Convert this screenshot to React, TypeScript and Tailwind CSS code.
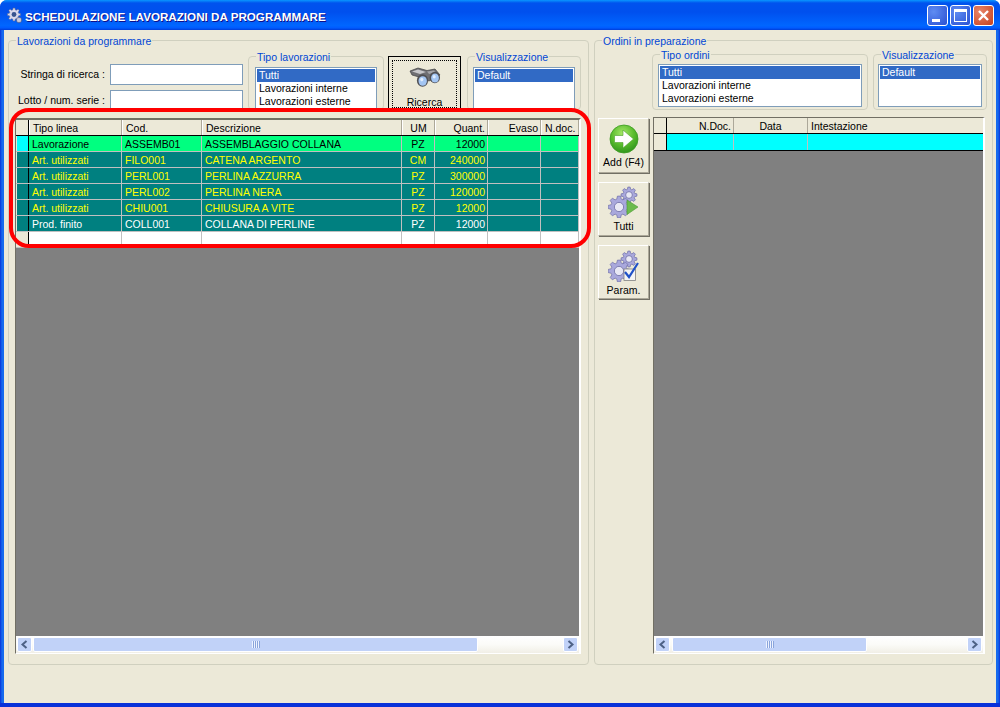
import React from 'react';

const gearPath = (cx: number, cy: number, r: number, teeth = 8) => {
  const pts: string[] = [];
  const step = (Math.PI * 2) / teeth;
  for (let i = 0; i < teeth; i++) {
    const a = i * step;
    const at = (rad: number, off: number) =>
      `${(cx + rad * Math.cos(a + off)).toFixed(2)},${(cy + rad * Math.sin(a + off)).toFixed(2)}`;
    pts.push(at(r * 0.74, -step * 0.36), at(r, -step * 0.18), at(r, step * 0.18), at(r * 0.74, step * 0.36));
  }
  return `M${pts.join('L')}Z`;
};

const Gear = ({ cx, cy, r }: { cx: number; cy: number; r: number }) => (
  <g>
    <path d={gearPath(cx, cy, r)} fill="#a9a8dc" stroke="#6e6ea6" strokeWidth="0.7" />
    <circle cx={cx} cy={cy} r={r * 0.42} fill="#e8e8f4" stroke="#6e6ea6" strokeWidth="0.8" />
  </g>
);

const Binoculars = () => (
  <svg className="shrink-0" width="36" height="24" viewBox="0 0 36 24">
    <path d="M3 5 L11 2 L20 4.5 L28 3 L33 9 L22 15 L12 11 L5 9 Z" fill="#6f6f73" stroke="#3f3f42" strokeWidth="0.7" />
    <path d="M5 5.5 L11 3.5 L19 6 L13 8 Z" fill="#c8c8cb" />
    <path d="M20 5.5 L27 4.5 L29 6.5 L22 8 Z" fill="#a4a4a8" />
    <ellipse cx="15.5" cy="14.5" rx="5.6" ry="6.2" fill="#4f4f53" />
    <ellipse cx="15.7" cy="15" rx="4.2" ry="4.8" fill="#a3c5f2" />
    <ellipse cx="14.8" cy="13.6" rx="1.6" ry="1.8" fill="#dfecfd" />
    <ellipse cx="27.8" cy="11.5" rx="5.2" ry="5.8" fill="#4f4f53" />
    <ellipse cx="28" cy="12" rx="3.9" ry="4.5" fill="#a3c5f2" />
    <ellipse cx="27.2" cy="10.8" rx="1.5" ry="1.7" fill="#dfecfd" />
  </svg>
);

const AddIcon = () => (
  <svg width="30" height="30" viewBox="0 0 30 30">
    <defs>
      <radialGradient id="addGreen" cx="45%" cy="30%" r="75%">
        <stop offset="0%" stopColor="#a6e868" />
        <stop offset="55%" stopColor="#58bb2c" />
        <stop offset="100%" stopColor="#2b8f1a" />
      </radialGradient>
    </defs>
    <circle cx="15" cy="15" r="14" fill="url(#addGreen)" stroke="#3c9a22" strokeWidth="0.8" />
    <path d="M5.5 11.5 H14 V6 L24.5 15 L14 24 V18.5 H5.5 Z" fill="#fff" stroke="#4b9f2c" strokeWidth="0.6" />
  </svg>
);

const TuttiIcon = () => (
  <svg width="32" height="32" viewBox="0 0 32 32">
    <Gear cx={21} cy={9} r={8} />
    <Gear cx={11} cy={21} r={11} />
    <path d="M19 14 L30 21 L19 28.5 Z" fill="#6cbb4c" stroke="#4a9a34" strokeWidth="0.6" />
  </svg>
);

const ParamIcon = () => (
  <svg width="32" height="32" viewBox="0 0 32 32">
    <Gear cx={21} cy={9} r={8} />
    <Gear cx={11} cy={21} r={11} />
    <rect x="16" y="19" width="11.5" height="11.5" fill="#f4f4f4" stroke="#808080" strokeWidth="0.8" />
    <path d="M17 22 L21 27 L30 13" fill="none" stroke="#1f51c8" strokeWidth="2.2" />
  </svg>
);

const TitleIcon = () => (
  <svg width="17" height="17" viewBox="0 0 17 17">
    <path d={gearPath(8, 7.5, 6.5)} fill="#d9d9ec" stroke="#5c6a96" strokeWidth="0.6" />
    <circle cx="8" cy="7.5" r="2.4" fill="#37548f" />
    <path d={gearPath(13, 13, 3)} fill="#c8cbe0" stroke="#3c4a76" strokeWidth="0.5" />
  </svg>
);

const Group = ({ title, className, children }: { title: string; className: string; children?: React.ReactNode }) => (
  <fieldset className={`box-border border border-[#d0d0bf] rounded-[4px] min-w-0 ${className}`}>
    <legend className="ml-[7px] px-[1px] text-[#0046d5] leading-[14px] h-[13px]">{title}</legend>
    {children}
  </fieldset>
);

const ListBox = ({ items, className }: { items: string[]; className: string }) => (
  <div className={`box-border border border-[#7f9db9] bg-white p-px overflow-hidden ${className}`}>
    {items.map((it, i) => (
      <div key={it} className={`h-[13px] leading-[13px] pl-[2px] whitespace-nowrap ${i === 0 ? 'bg-[#316ac5] text-white' : 'text-black'}`}>
        {it}
      </div>
    ))}
  </div>
);

const SideButton = ({ label, icon, className }: { label: string; icon: React.ReactNode; className: string }) => (
  <button className={`box-border w-[51px] flex flex-col items-center bg-[#ece9d8] border border-t-white border-l-white border-r-[#aca899] border-b-[#aca899] shadow-[1px_1px_0_#716f64] text-black ${className}`}>
    {icon}
    <span className="leading-[13px] mt-[2px] whitespace-nowrap">{label}</span>
  </button>
);

type Col = { label: string; w: string; align?: string };

const Cell = ({ w, align, className, children }: { w: string; align?: string; className?: string; children?: React.ReactNode }) => (
  <div className={`box-border h-full shrink-0 px-[3px] whitespace-nowrap overflow-hidden ${w} ${align ?? ''} ${className ?? ''}`}>{children}</div>
);

const HeaderRow = ({ cols, ind }: { cols: Col[]; ind: string }) => (
  <div className="flex h-[16px] shrink-0 leading-[16px] bg-[#ece9d8] border-b border-black text-black">
    <div className={`box-border h-full shrink-0 border-r border-black ${ind}`} />
    {cols.map((c) => (
      <Cell key={c.label} w={c.w} align={c.align} className="border-r border-[#aca899] border-l border-l-white">
        {c.label}
      </Cell>
    ))}
  </div>
);

const leftCols: Col[] = [
  { label: 'Tipo linea', w: 'w-[93px]' },
  { label: 'Cod.', w: 'w-[80px]' },
  { label: 'Descrizione', w: 'w-[200px]' },
  { label: 'UM', w: 'w-[33px]', align: 'text-center' },
  { label: 'Quant.', w: 'w-[53px]', align: 'text-right pr-[2px]' },
  { label: 'Evaso', w: 'w-[53px]', align: 'text-right pr-[2px]' },
  { label: 'N.doc.', w: 'w-[38px]', align: 'text-right' },
];

const rows = [
  { tipo: 'Lavorazione', cod: 'ASSEMB01', des: 'ASSEMBLAGGIO COLLANA', um: 'PZ', q: '12000', bg: 'bg-[#00ff80]', fg: 'text-black', ind: 'bg-[#00ffff]' },
  { tipo: 'Art. utilizzati', cod: 'FILO001', des: 'CATENA ARGENTO', um: 'CM', q: '240000', bg: 'bg-[#008080]', fg: 'text-[#ffff00]', ind: 'bg-[#008080]' },
  { tipo: 'Art. utilizzati', cod: 'PERL001', des: 'PERLINA AZZURRA', um: 'PZ', q: '300000', bg: 'bg-[#008080]', fg: 'text-[#ffff00]', ind: 'bg-[#008080]' },
  { tipo: 'Art. utilizzati', cod: 'PERL002', des: 'PERLINA NERA', um: 'PZ', q: '120000', bg: 'bg-[#008080]', fg: 'text-[#ffff00]', ind: 'bg-[#008080]' },
  { tipo: 'Art. utilizzati', cod: 'CHIU001', des: 'CHIUSURA A VITE', um: 'PZ', q: '12000', bg: 'bg-[#008080]', fg: 'text-[#ffff00]', ind: 'bg-[#008080]' },
  { tipo: 'Prod. finito', cod: 'COLL001', des: 'COLLANA DI PERLINE', um: 'PZ', q: '12000', bg: 'bg-[#008080]', fg: 'text-white', ind: 'bg-[#008080]' },
];

const DataRow = ({ vals, bg, fg, ind }: { vals: string[]; bg: string; fg: string; ind: string }) => (
  <div className={`flex h-[16px] shrink-0 leading-[16px] border-b border-[#c0c0c0] ${bg} ${fg}`}>
    <div className="box-border h-full w-[13px] shrink-0 bg-[#ece9d8] border-r border-black pl-[1px]">
      <div className={`h-full ${ind}`} />
    </div>
    {leftCols.map((c, i) => (
      <Cell key={c.label} w={c.w} align={c.align} className="border-r border-[#c0c0c0]">
        {vals[i]}
      </Cell>
    ))}
  </div>
);

const Chevron = ({ dir }: { dir: 'left' | 'right' }) => (
  <svg width="9" height="9" viewBox="0 0 9 9">
    <path d={dir === 'left' ? 'M6.5 1 L2.5 4.5 L6.5 8' : 'M2.5 1 L6.5 4.5 L2.5 8'} fill="none" stroke="#4d6185" strokeWidth="2" />
  </svg>
);

const ScrollButton = ({ dir }: { dir: 'left' | 'right' }) => (
  <div className="box-border w-[15px] h-[15px] shrink-0 flex items-center justify-center rounded-[2px] border border-white bg-[#c1d2f8]">
    <Chevron dir={dir} />
  </div>
);

const Scrollbar = ({ thumb }: { thumb: string }) => (
  <div className="flex items-center h-[17px] shrink-0 pl-[1px] pr-[1px] bg-[linear-gradient(180deg,#ffffff_0%,#fbfbf8_50%,#f1efe6_100%)]">
    <ScrollButton dir="left" />
    <div className={`box-border h-[15px] shrink-0 flex items-center justify-center rounded-[2px] border border-white bg-[#c1d2f8] ${thumb}`}>
      <div className="w-[8px] h-[7px] bg-[repeating-linear-gradient(90deg,#eef3ff_0px,#eef3ff_1px,#8aa5dc_1px,#8aa5dc_2px)]" />
    </div>
    <div className="flex-1" />
    <ScrollButton dir="right" />
  </div>
);

const App: React.FC = () => {
  return (
    <div className="w-[1000px] h-[707px] bg-white overflow-hidden text-[10.5px] text-black [font-family:'Liberation_Sans',sans-serif] relative">
      <div className="w-full h-full flex flex-col rounded-t-[7px] overflow-hidden border-b-[4px] border-b-[#0831d9] bg-[linear-gradient(90deg,#0831d9_0px,#166aee_2px,#166aee_998px,#0831d9_1000px)]">
        {/* title bar */}
        <div className="h-[30px] shrink-0 flex items-center pl-[6px] pr-[6px] bg-[linear-gradient(180deg,#0997ff_0%,#0053ee_10%,#0050ee_40%,#0066ff_85%,#005bff_93%,#003dd7_100%)]">
          <TitleIcon />
          <span className="ml-[2px] mt-[4px] text-white font-bold text-[11.65px] [text-shadow:1px_1px_0_#0f1089] whitespace-nowrap">
            SCHEDULAZIONE LAVORAZIONI DA PROGRAMMARE
          </span>
          <div className="ml-auto flex gap-[2px]">
            <div className="box-border w-[21px] h-[21px] rounded-[3px] border border-white bg-[radial-gradient(circle_at_30%_30%,#5f8cf2,#2a50d2)] flex items-end pl-[4px] pb-[3px]">
              <div className="w-[8px] h-[3px] bg-white" />
            </div>
            <div className="box-border w-[21px] h-[21px] rounded-[3px] border border-white bg-[radial-gradient(circle_at_30%_30%,#5f8cf2,#2a50d2)] flex items-center justify-center">
              <div className="box-border w-[13px] h-[13px] border border-white border-t-[3px]" />
            </div>
            <div className="box-border w-[21px] h-[21px] rounded-[3px] border border-white bg-[radial-gradient(circle_at_30%_30%,#e8866a,#c8401c)] flex items-center justify-center">
              <svg width="13" height="13" viewBox="0 0 13 13">
                <path d="M2 2 L11 11 M11 2 L2 11" stroke="#fff" strokeWidth="2.4" />
              </svg>
            </div>
          </div>
        </div>

        {/* client area */}
        <div className="flex-1 mx-[4px] bg-[#ece9d8] flex pl-[4px] pt-[4px] gap-[5px]">
          <Group title="Lavorazioni da programmare" className="w-[581px] h-[631px]">
            <div className="pl-[6px]">
              <div className="flex h-[71px] overflow-hidden">
                <div className="w-[228px] shrink-0 pt-[17px] flex flex-col gap-[5px]">
                  <div className="flex items-center justify-end gap-[5px]">
                    <span className="whitespace-nowrap">Stringa di ricerca :</span>
                    <div className="box-border w-[133px] h-[21px] shrink-0 border border-[#7f9db9] bg-white" />
                  </div>
                  <div className="flex items-center justify-end gap-[5px]">
                    <span className="whitespace-nowrap">Lotto / num. serie :</span>
                    <div className="box-border w-[133px] h-[21px] shrink-0 border border-[#7f9db9] bg-white" />
                  </div>
                </div>
                <Group title="Tipo lavorazioni" className="ml-[5px] mt-[3px] w-[136px] h-[60px] shrink-0">
                  <div className="px-[6px]">
                    <ListBox className="mt-[4px] h-[43px]" items={['Tutti', 'Lavorazioni interne', 'Lavorazioni esterne']} />
                  </div>
                </Group>
                <button className="box-border ml-[4px] mt-[9px] w-[73px] h-[56px] shrink-0 border border-black bg-[#ece9d8] p-[3px]">
                  <div className="h-full border border-dotted border-black flex flex-col items-center pt-[5px]">
                    <Binoculars />
                    <span className="mt-[6px] shrink-0 leading-[13px]">Ricerca</span>
                  </div>
                </button>
                <Group title="Visualizzazione" className="ml-[6px] mt-[3px] w-[114px] h-[60px] shrink-0">
                  <div className="px-[5px]">
                    <ListBox className="mt-[4px] h-[43px]" items={['Default']} />
                  </div>
                </Group>
              </div>

              {/* griglia lavorazioni */}
              <div className="box-border w-[566px] h-[536px] flex flex-col bg-[#808080] border-t-2 border-t-[#716f64] border-l border-l-[#716f64] border-r-2 border-r-white border-b border-b-white">
                <HeaderRow cols={leftCols} ind="w-[13px]" />
                {rows.map((r) => (
                  <DataRow key={r.cod} vals={[r.tipo, r.cod, r.des, r.um, r.q, '', '']} bg={r.bg} fg={r.fg} ind={r.ind} />
                ))}
                <DataRow vals={['', '', '', '', '', '', '']} bg="bg-white" fg="text-black" ind="bg-[#ece9d8]" />
                <div className="flex-1" />
                <Scrollbar thumb="ml-[1px] w-[445px]" />
              </div>
            </div>
          </Group>

          <Group title="Ordini in preparazione" className="w-[399px] h-[631px]">
            <div className="flex h-[71px] pl-[57px] overflow-hidden">
              <Group title="Tipo ordini" className="mt-[1px] w-[216px] h-[62px] shrink-0">
                <div className="px-[5px]">
                  <ListBox className="mt-[3px] h-[43px]" items={['Tutti', 'Lavorazioni interne', 'Lavorazioni esterne']} />
                </div>
              </Group>
              <Group title="Visualizzazione" className="ml-[5px] mt-[1px] w-[114px] h-[62px] shrink-0">
                <div className="px-[4px]">
                  <ListBox className="mt-[3px] h-[43px]" items={['Default']} />
                </div>
              </Group>
            </div>
            <div className="flex pl-[3px] gap-[4px] h-[536px]">
              <div className="w-[51px] shrink-0 flex flex-col gap-[9px]">
                <SideButton label="Add (F4)" icon={<div className="mt-[5px]"><AddIcon /></div>} className="h-[55px]" />
                <SideButton label="Tutti" icon={<div className="mt-[3px] h-[32px]"><TuttiIcon /></div>} className="h-[54px]" />
                <SideButton label="Param." icon={<div className="mt-[4px] h-[32px]"><ParamIcon /></div>} className="h-[54px]" />
              </div>
              <div className="box-border w-[332px] h-[537px] -mt-px flex flex-col bg-[#808080] border-t border-t-[#716f64] border-l border-l-[#716f64] border-r-2 border-r-white border-b border-b-white">
                <div className="flex h-[16px] shrink-0 leading-[16px] bg-[#ece9d8] border-b border-black">
                  <div className="box-border h-full w-[13px] shrink-0 border-r border-black" />
                  <Cell w="w-[67px]" align="text-right pr-[2px]" className="border-r border-[#aca899]">N.Doc.</Cell>
                  <Cell w="w-[74px]" align="text-center" className="border-r border-[#aca899]">Data</Cell>
                  <Cell w="flex-1">Intestazione</Cell>
                </div>
                <div className="flex h-[17px] shrink-0 bg-[#00ffff] border-b border-black">
                  <div className="box-border h-full w-[13px] shrink-0 bg-[#ece9d8] border-r border-black" />
                  <Cell w="w-[67px]" className="border-r border-[#c0c0c0]" />
                  <Cell w="w-[74px]" className="border-r border-[#c0c0c0]" />
                </div>
                <div className="flex-1" />
                <Scrollbar thumb="ml-[2px] w-[195px]" />
              </div>
            </div>
          </Group>
        </div>
      </div>

      {/* annotazione rossa sopra la griglia */}
      <div className="box-border absolute left-[9px] top-[108px] w-[582px] h-[140px] border-[4px] border-[#ff0000] rounded-[20px] pointer-events-none" />
    </div>
  );
};

export default App;
